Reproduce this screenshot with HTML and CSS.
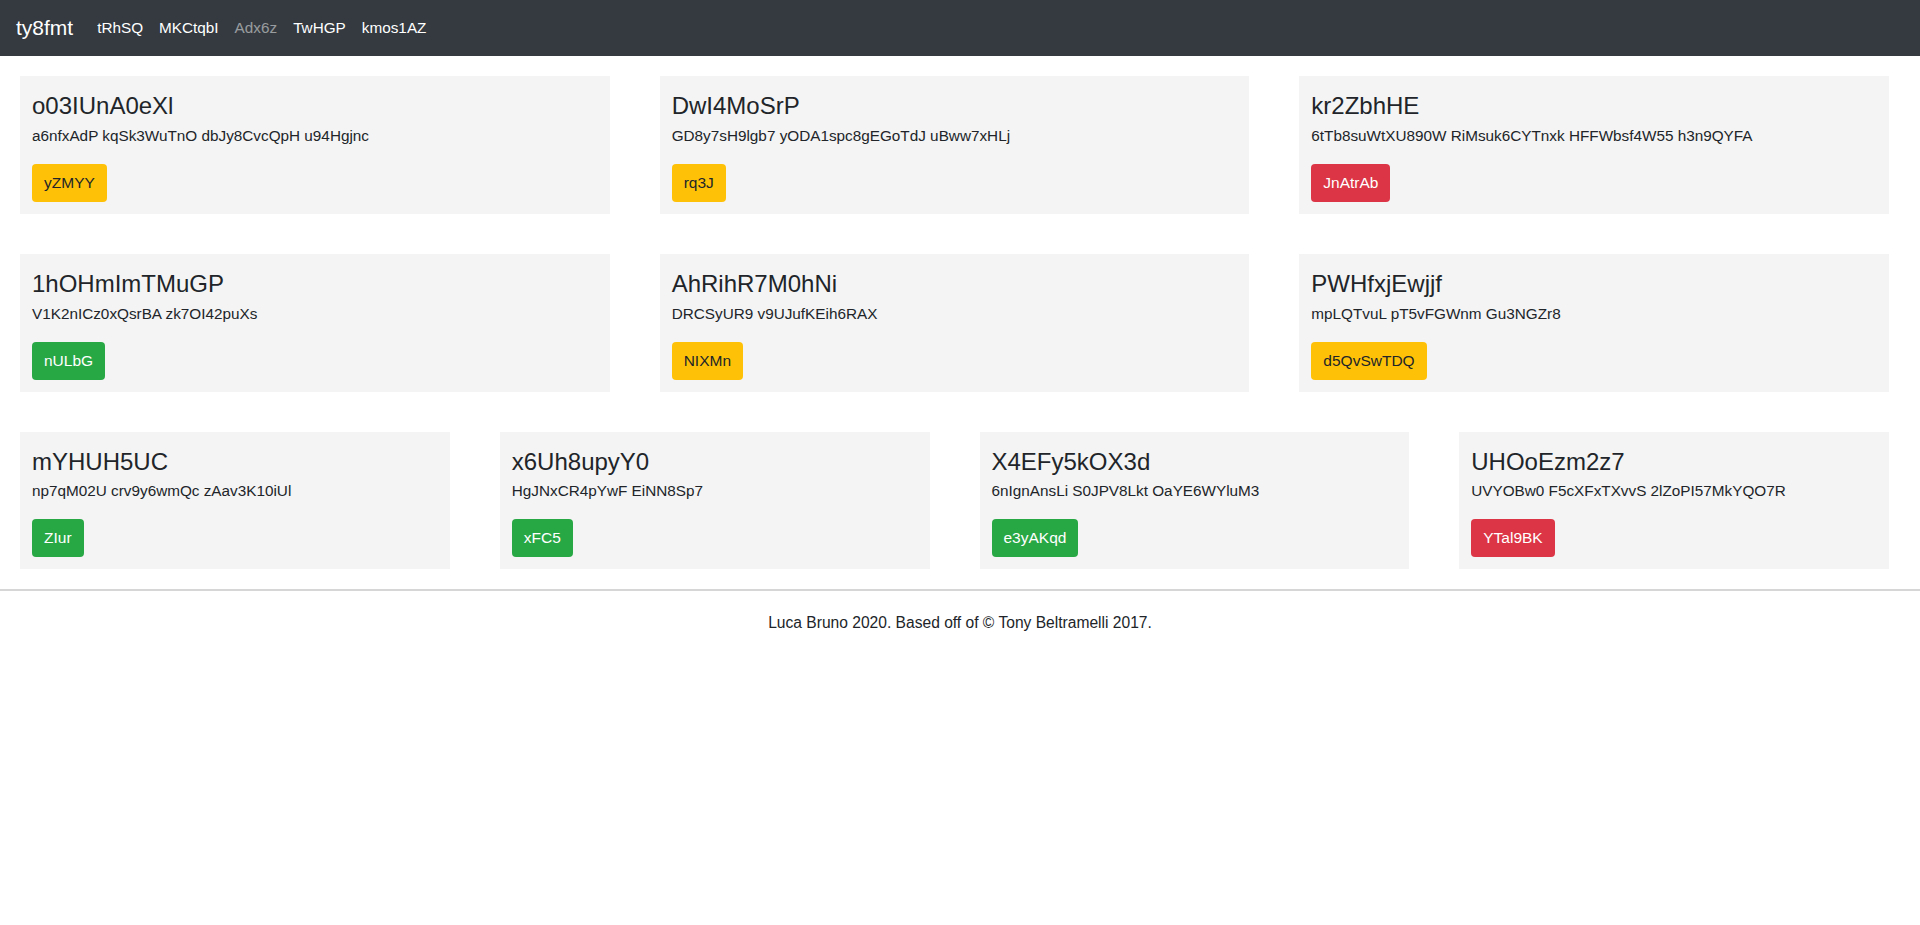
FILE: index.html
```html
<!DOCTYPE html>
<html lang="en">
<head>
<meta charset="utf-8">
<title>ty8fmt</title>
<link rel="stylesheet" href="styles.css">
</head>
<body>
<header class="navbar">
  <a class="brand" href="#">ty8fmt</a>
  <nav class="nav">
    <a class="nav-link" href="#">tRhSQ</a>
    <a class="nav-link" href="#">MKCtqbI</a>
    <a class="nav-link muted" href="#">Adx6z</a>
    <a class="nav-link" href="#">TwHGP</a>
    <a class="nav-link" href="#">kmos1AZ</a>
  </nav>
</header>
<main class="main">
  <section class="row cols-3">
    <div class="card">
      <h4 class="card-title">o03IUnA0eXl</h4>
      <p class="card-text">a6nfxAdP kqSk3WuTnO dbJy8CvcQpH u94Hgjnc</p>
      <a class="btn btn-warning" href="#">yZMYY</a>
    </div>
    <div class="card">
      <h4 class="card-title">DwI4MoSrP</h4>
      <p class="card-text">GD8y7sH9lgb7 yODA1spc8gEGoTdJ uBww7xHLj</p>
      <a class="btn btn-warning" href="#">rq3J</a>
    </div>
    <div class="card">
      <h4 class="card-title">kr2ZbhHE</h4>
      <p class="card-text">6tTb8suWtXU890W RiMsuk6CYTnxk HFFWbsf4W55 h3n9QYFA</p>
      <a class="btn btn-danger" href="#">JnAtrAb</a>
    </div>
  </section>
  <section class="row cols-3">
    <div class="card">
      <h4 class="card-title">1hOHmImTMuGP</h4>
      <p class="card-text">V1K2nICz0xQsrBA zk7OI42puXs</p>
      <a class="btn btn-success" href="#">nULbG</a>
    </div>
    <div class="card">
      <h4 class="card-title">AhRihR7M0hNi</h4>
      <p class="card-text">DRCSyUR9 v9UJufKEih6RAX</p>
      <a class="btn btn-warning" href="#">NIXMn</a>
    </div>
    <div class="card">
      <h4 class="card-title">PWHfxjEwjjf</h4>
      <p class="card-text">mpLQTvuL pT5vFGWnm Gu3NGZr8</p>
      <a class="btn btn-warning" href="#">d5QvSwTDQ</a>
    </div>
  </section>
  <section class="row cols-4">
    <div class="card">
      <h4 class="card-title">mYHUH5UC</h4>
      <p class="card-text">np7qM02U crv9y6wmQc zAav3K10iUl</p>
      <a class="btn btn-success" href="#">ZIur</a>
    </div>
    <div class="card">
      <h4 class="card-title">x6Uh8upyY0</h4>
      <p class="card-text">HgJNxCR4pYwF EiNN8Sp7</p>
      <a class="btn btn-success" href="#">xFC5</a>
    </div>
    <div class="card">
      <h4 class="card-title">X4EFy5kOX3d</h4>
      <p class="card-text">6nIgnAnsLi S0JPV8Lkt OaYE6WYluM3</p>
      <a class="btn btn-success" href="#">e3yAKqd</a>
    </div>
    <div class="card">
      <h4 class="card-title">UHOoEzm2z7</h4>
      <p class="card-text">UVYOBw0 F5cXFxTXvvS 2lZoPI57MkYQO7R</p>
      <a class="btn btn-danger" href="#">YTal9BK</a>
    </div>
  </section>
</main>
<footer class="footer">
  <p>Luca Bruno 2020. Based off of © Tony Beltramelli 2017.</p>
</footer>
</body>
</html>
```

FILE: styles.css
```css
* { box-sizing: border-box; }

html, body {
  margin: 0;
  padding: 0;
}

body {
  font-family: "Segoe UI", "Liberation Sans", Arial, sans-serif;
  font-size: 16px;
  line-height: 1.5;
  color: #212529;
  background: #ffffff;
}

a { text-decoration: none; }

.navbar {
  display: flex;
  align-items: center;
  height: 56px;
  padding: 0 16px;
  background: #343a40;
}

.brand {
  color: #ffffff;
  font-size: 21px;
  line-height: 30px;
  margin-right: 16px;
}

.nav {
  display: flex;
}

.nav-link {
  color: #ffffff;
  font-size: 15.3px;
  line-height: 24px;
  padding: 8px;
}

.nav-link.muted {
  color: rgba(255, 255, 255, 0.5);
}

.main {
  padding: 20px 31px 0 20px;
}

.row {
  display: grid;
  column-gap: 50px;
  margin-bottom: 40px;
}

.row:last-child { margin-bottom: 0; }

.cols-3 { grid-template-columns: repeat(3, 1fr); }
.cols-4 { grid-template-columns: repeat(4, 1fr); }

.card {
  background: #f4f4f4;
  padding: 16px 12px 12px 12px;
}

.card-title {
  margin: 0 0 3px 0;
  font-size: 24px;
  font-weight: 500;
  line-height: 1.2;
}

.card-text {
  margin: 0 0 16px 0;
  font-size: 15.3px;
  line-height: 24px;
}

.btn {
  display: inline-block;
  font-size: 15.5px;
  line-height: 24px;
  padding: 7px 12px;
  border-radius: 4px;
}

.btn-warning { background: #ffc107; color: #212529; }
.btn-success { background: #28a745; color: #ffffff; }
.btn-danger { background: #dc3545; color: #ffffff; }

.footer {
  margin-top: 20px;
  border-top: 2px solid #d6d6d6;
  text-align: center;
}

.footer p {
  margin: 0;
  padding-top: 20px;
  font-size: 15.6px;
  line-height: 24px;
}
```
